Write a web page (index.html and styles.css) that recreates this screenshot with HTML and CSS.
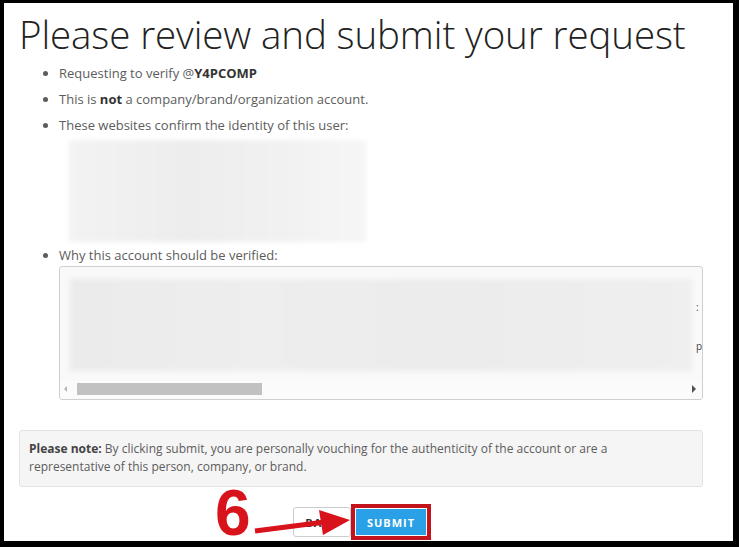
FILE: index.html
```html
<!DOCTYPE html>
<html lang="en">
<head>
    <meta charset="UTF-8">
    <title>Please review and submit your request</title>
    <link rel="stylesheet" href="styles.css">
</head>
<body>
<div class="frame">
    <h1>Please review and submit your request</h1>

    <ul class="review">
        <li>Requesting to verify @<strong>Y4PCOMP</strong></li>
        <li>This is <strong>not</strong> a company/brand/organization account.</li>
        <li>These websites confirm the identity of this user:
            <div class="blurred sites"></div>
        </li>
        <li>Why this account should be verified:
            <div class="reason">
                <div class="reason-body">
                    <div class="blurred reason-text"></div>
                    <div class="cutoff"><span>:</span><span>p</span></div>
                </div>
                <div class="hscroll">
                    <span class="arrow-left"></span>
                    <span class="track"><span class="thumb"></span></span>
                    <span class="arrow-right"></span>
                </div>
            </div>
        </li>
    </ul>

    <div class="note">
        <strong>Please note:</strong> By clicking submit, you are personally vouching for the authenticity of the account or are a representative of this person, company, or brand.
    </div>

    <div class="actions">
        <button class="btn btn-back">BACK</button>
        <span class="highlight-box"><button class="btn btn-submit">SUBMIT</button></span>
    </div>

    <!-- tutorial annotation drawn over the page -->
    <div class="step-num">6</div>
    <svg class="step-arrow" width="110" height="40" viewBox="0 0 110 40">
        <path d="M2 31 L72 22" stroke="#d8131b" stroke-width="5" fill="none"/>
        <path d="M66 10 L97 20 L70 35 Z" fill="#d8131b"/>
    </svg>
</div>
</body>
</html>
```

FILE: styles.css
```css
* { box-sizing: border-box; }
body { margin: 0; background: #000; font-family: "Open Sans", "Liberation Sans", sans-serif; color: #5c5c5c; }
.frame { position: relative; width: 739px; height: 547px; background: #fff; border-style: solid; border-color: #000; border-width: 3px 6px 6px 4px; }

h1 { margin: 9px 0 0 15px; font-size: 38.5px; font-weight: 300; line-height: 44px; color: #222; letter-spacing: -0.1px; }

.review { margin: 4px 0 0; padding-left: 55px; font-size: 13px; line-height: 26px; }
.review strong { font-weight: 700; color: #333; }

.blurred { background: linear-gradient(90deg, #f3f3f3, #ededed 40%, #f1f1f1 70%, #f6f6f6); filter: blur(2px); }
.sites { width: 297px; height: 102px; margin: 2px 0 0 10px; }

.reason { width: 644px; height: 134px; margin-top: -2px; border: 1px solid #cfcfcf; border-radius: 3px; background: #f9f9f9; display: flex; flex-direction: column; overflow: hidden; }
.reason-body { flex: 1; display: flex; padding: 12px 0 0 10px; }
.reason-text { width: 628px; height: 92px; background: linear-gradient(90deg, #ebebeb, #eeeeee 30%, #ececec 60%, #efefef); }
.cutoff { display: flex; flex-direction: column; font-size: 10px; line-height: 12px; color: #444; padding: 22px 0 0 4px; gap: 27px; }

.hscroll { height: 18px; display: flex; align-items: center; padding: 0 6px 2px 4px; background: #fbfbfb; }
.track { flex: 1; height: 12px; padding: 0 0 0 10px; }
.thumb { display: block; width: 185px; height: 12px; background: #c1c1c1; }
.arrow-left { width: 0; height: 0; border-style: solid; border-width: 3px 3px 3px 0; border-color: transparent #b5b5b5 transparent transparent; }
.arrow-right { width: 0; height: 0; border-style: solid; border-width: 4px 0 4px 4px; border-color: transparent transparent transparent #505050; }

.note { margin: 30px 0 0 15px; width: 684px; height: 57px; padding: 9px 30px 9px 9px; background: #f5f5f5; border: 1px solid #e3e3e3; border-radius: 3px; font-size: 12px; line-height: 18px; color: #5c5c5c; }
.note strong { color: #444; }

.actions { display: flex; align-items: center; margin: 17px 0 0 289px; }
.btn { font-family: "Open Sans", "Liberation Sans", sans-serif; font-size: 11px; font-weight: 700; letter-spacing: 1px; border-radius: 3px; cursor: pointer; }
.btn-back { width: 58px; height: 30px; background: #fff; border: 1px solid #ccc; color: #333; }
.highlight-box { display: block; border: 4px solid #c3141d; padding: 1px; }
.btn-submit { display: block; width: 70px; height: 26px; background: #2aa0e6; color: #fff; border: 0; border-radius: 0; }

.step-num { position: absolute; left: 211px; top: 478px; font-family: "Liberation Sans", Arial, sans-serif; font-weight: 700; font-size: 64px; line-height: 64px; color: #d8131b; }
.step-arrow { position: absolute; left: 249px; top: 497px; }
```
